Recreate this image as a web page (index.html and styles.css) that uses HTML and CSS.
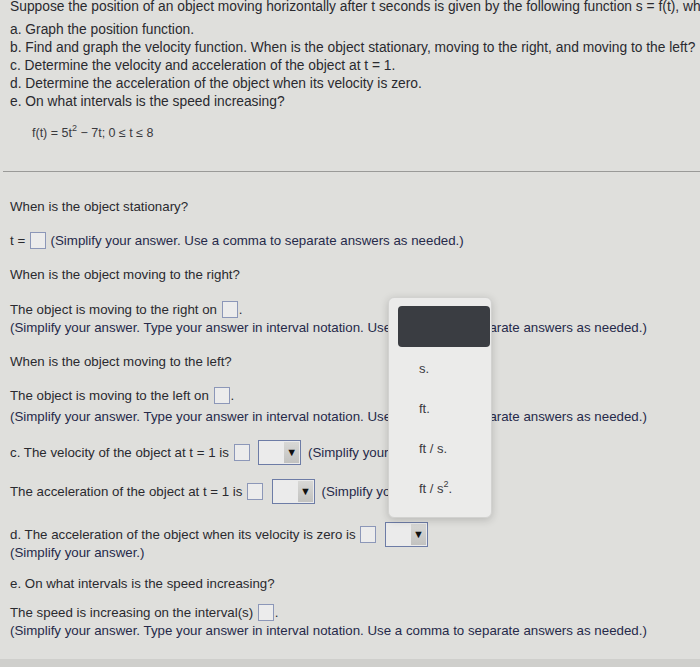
FILE: index.html
```html
<!DOCTYPE html>
<html>
<head>
<meta charset="utf-8">
<link rel="stylesheet" href="styles.css">
</head>
<body>
<div class="page">
  <section class="problem">
    <p class="intro">Suppose the position of an object moving horizontally after t seconds is given by the following function s = f(t), where s is measured in feet.</p>
    <ul class="tasks">
      <li>a. Graph the position function.</li>
      <li>b. Find and graph the velocity function. When is the object stationary, moving to the right, and moving to the left?</li>
      <li>c. Determine the velocity and acceleration of the object at t = 1.</li>
      <li>d. Determine the acceleration of the object when its velocity is zero.</li>
      <li>e. On what intervals is the speed increasing?</li>
    </ul>
    <p class="formula">f(t) = 5t<sup>2</sup> − 7t; 0 ≤ t ≤ 8</p>
  </section>

  <hr class="divider">

  <section class="answers">
    <p class="q l1">When is the object stationary?</p>
    <p class="q l2">t = <span class="box"></span> <span class="note">(Simplify your answer. Use a comma to separate answers as needed.)</span></p>
    <p class="q l3">When is the object moving to the right?</p>
    <p class="q l4">The object is moving to the right on <span class="box"></span>.</p>
    <p class="note line">(Simplify your answer. Type your answer in interval notation. Use a comma to separate answers as needed.)</p>
    <p class="q l6">When is the object moving to the left?</p>
    <p class="q l7">The object is moving to the left on <span class="box"></span>.</p>
    <p class="note line l8">(Simplify your answer. Type your answer in interval notation. Use a comma to separate answers as needed.)</p>
    <p class="q l9">c. The velocity of the object at t = 1 is <span class="box"></span> <span class="select"><span class="btn">▼</span></span> <span class="note">(Simplify your answer.)</span></p>
    <p class="q l10">The acceleration of the object at t = 1 is <span class="box"></span> <span class="select"><span class="btn">▼</span></span> <span class="note">(Simplify your answer.)</span></p>
    <p class="q l11">d. The acceleration of the object when its velocity is zero is <span class="box"></span> <span class="select"><span class="btn">▼</span></span></p>
    <p class="note line">(Simplify your answer.)</p>
    <p class="q l13">e. On what intervals is the speed increasing?</p>
    <p class="q l14">The speed is increasing on the interval(s) <span class="box"></span>.</p>
    <p class="note line">(Simplify your answer. Type your answer in interval notation. Use a comma to separate answers as needed.)</p>
  </section>
</div>

<div class="menu">
  <div class="menu-item selected"></div>
  <div class="menu-item">s.</div>
  <div class="menu-item">ft.</div>
  <div class="menu-item">ft / s.</div>
  <div class="menu-item">ft / s<sup>2</sup>.</div>
</div>

<div class="footer"></div>
</body>
</html>
```

FILE: styles.css
```css
html, body {
  margin: 0;
  padding: 0;
}
body {
  width: 700px;
  height: 667px;
  overflow: hidden;
  position: relative;
  background: #dfdfdc;
  font-family: "Liberation Sans", Arial, sans-serif;
  font-size: 13.3px;
  color: #2a2a2f;
}
p, ul {
  margin: 0;
  padding: 0;
}
.page {
  white-space: nowrap;
}
.problem {
  padding-left: 10px;
  font-size: 13.8px;
}
.intro {
  line-height: 18px;
  margin-top: -2px;
  margin-bottom: 5px;
}
.tasks {
  list-style: none;
  line-height: 18px;
}
.tasks li {
  height: 18px;
}
.formula {
  margin: 13px 0 0 22px;
  font-size: 12.5px;
  line-height: 18px;
  color: #3a3a3e;
}
.formula sup {
  font-size: 9px;
  vertical-align: 6px;
  line-height: 0;
}
.divider {
  margin: 29px 0 0 3px;
  border: none;
  border-top: 1px solid #9a9a98;
  height: 0;
}
.answers {
  padding-left: 10px;
  display: flex;
  flex-direction: column;
}
.q, .line {
  line-height: 18px;
  height: 18px;
}
.note {
  color: #262a4a;
}
.l1 { margin-top: 26px; }
.l2 { margin-top: 16px; }
.l3 { margin-top: 16px; }
.l4 { margin-top: 17px; }
.l6 { margin-top: 16px; }
.l7 { margin-top: 16px; }
.l8 { margin-top: 3px; }
.l9 { margin-top: 18px; }
.l10 { margin-top: 21px; }
.l11 { margin-top: 25px; }
.l13 { margin-top: 13px; }
.l14 { margin-top: 11px; }
.box {
  display: inline-block;
  width: 14px;
  height: 15px;
  border: 1px solid #8c97b8;
  background: #ececec;
  vertical-align: -4px;
  margin: 0 1px;
}
.select {
  display: inline-flex;
  justify-content: flex-end;
  width: 39px;
  height: 21px;
  border: 1px solid #6d7ca6;
  background: #ebebeb;
  vertical-align: middle;
  margin: -5px 3px -5px 4px;
  padding: 1px;
  box-sizing: content-box;
  position: relative;
  top: -1px;
}
.btn {
  width: 15px;
  height: 21px;
  background: linear-gradient(#d8d8d6, #c2c2c0);
  color: #111;
  font-size: 11px;
  line-height: 21px;
  text-align: center;
}
.menu {
  position: absolute;
  left: 388px;
  top: 297px;
  width: 104px;
  height: 221px;
  box-sizing: border-box;
  padding: 8px 1px 0 9px;
  background: #ebebea;
  border: 1px solid #d2d2d0;
  border-radius: 6px;
  box-shadow: 0 2px 8px rgba(0,0,0,0.18);
  font-size: 13px;
  color: #3a3a3e;
}
.menu-item {
  height: 40px;
  line-height: 40px;
  padding-left: 21px;
}
.menu-item sup {
  font-size: 9px;
  line-height: 0;
  vertical-align: 6px;
}
.menu-item.selected {
  height: 41px;
  background: #3a3d42;
  border-radius: 4px;
  margin-bottom: 2px;
}
.footer {
  position: absolute;
  left: 0;
  right: 0;
  bottom: 0;
  height: 8px;
  background: #cfcfcc;
}
```
